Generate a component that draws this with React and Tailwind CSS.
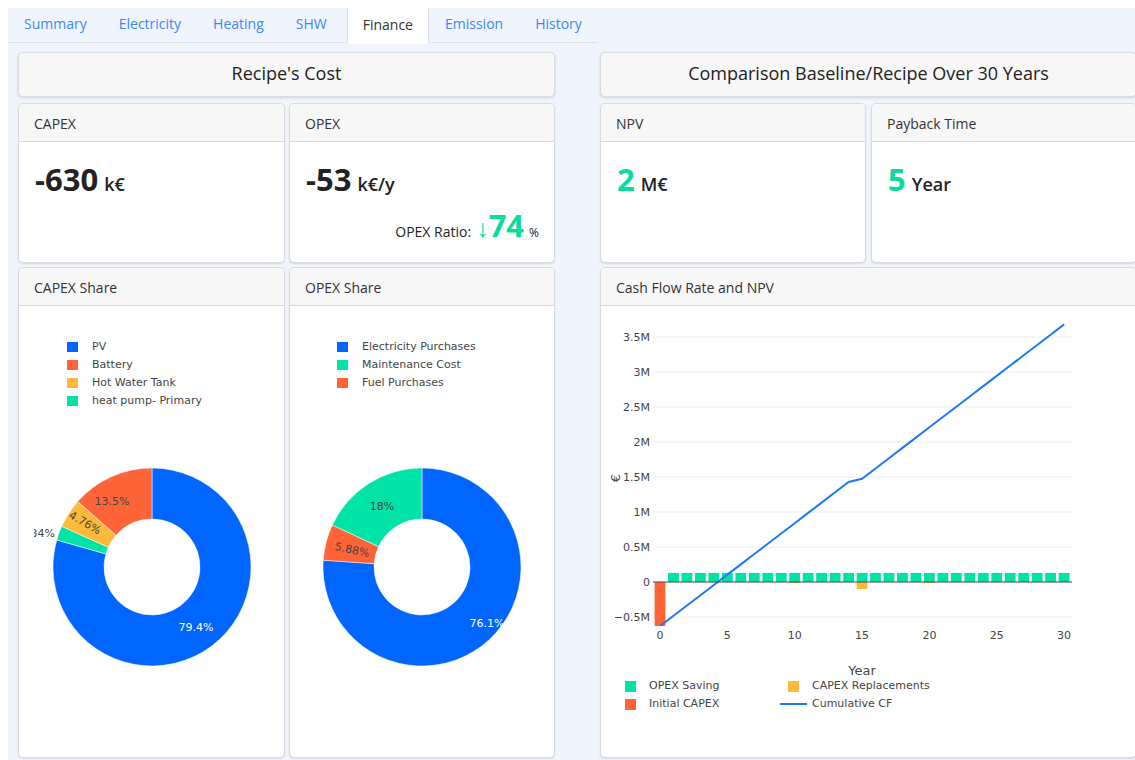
import { Fragment } from "react";

const BLUE = "#0066ff";
const RED = "#ff6338";
const YELLOW = "#ffb93a";
const TEAL = "#00e3a6";

const tabs = ["Summary", "Electricity", "Heating", "SHW", "Finance", "Emission", "History"];

// --- donut helpers ---
const pt = (cx, cy, r, f) => {
  const a = f * 2 * Math.PI;
  return [cx + r * Math.sin(a), cy - r * Math.cos(a)];
};

function arcPath(cx, cy, R, r, f0, f1) {
  const [x0, y0] = pt(cx, cy, R, f0);
  const [x1, y1] = pt(cx, cy, R, f1);
  const [x2, y2] = pt(cx, cy, r, f1);
  const [x3, y3] = pt(cx, cy, r, f0);
  const large = f1 - f0 > 0.5 ? 1 : 0;
  return `M${x0} ${y0} A${R} ${R} 0 ${large} 1 ${x1} ${y1} L${x2} ${y2} A${r} ${r} 0 ${large} 0 ${x3} ${y3}Z`;
}

function Donut({ id, cx, slices, labels }) {
  let acc = 0;
  return (
    <svg width="265" height="240" className="block">
      <defs>
        <clipPath id={id}>
          <rect x="15" y="0" width="260" height="240" />
        </clipPath>
      </defs>
      {slices.map((s, i) => {
        const d = arcPath(cx, 120, 99, 48, acc, acc + s.value);
        acc += s.value;
        return <path key={i} d={d} fill={s.color} stroke="#fff" strokeWidth="0.5" />;
      })}
      <g clipPath={`url(#${id})`} fontFamily="'DejaVu Sans', Verdana, sans-serif" fontSize="11">
        {labels.map((l, i) => (
          <text
            key={i}
            x={l.x}
            y={l.y}
            fill={l.fill || "#444"}
            textAnchor={l.anchor || "middle"}
            dominantBaseline="central"
            transform={l.rot ? `rotate(${l.rot} ${l.x} ${l.y})` : undefined}
          >
            {l.text}
          </text>
        ))}
      </g>
    </svg>
  );
}

function Legend({ items, className }) {
  return (
    <div className={`flex flex-col font-['DejaVu_Sans',Verdana,sans-serif] text-[11px] text-[#444] ${className}`}>
      {items.map((it) => (
        <div key={it.label} className="h-[18px] flex items-center">
          <span className="w-[11px] h-[10px] mr-[14px]" style={{ background: it.color }} />
          <span>{it.label}</span>
        </div>
      ))}
    </div>
  );
}

function Card({ title, className = "", children }) {
  return (
    <div className={`bg-white border border-[#d9dadc] rounded-[5px] shadow-[0_1px_2px_rgba(0,0,0,0.1)] flex flex-col overflow-hidden ${className}`}>
      <div className="h-[38px] shrink-0 bg-[#f7f7f7] border-b border-[#d9dadc] px-[15px] pt-[2px] flex items-center text-[14px] text-[#333]">
        {title}
      </div>
      <div className="flex-1 relative">{children}</div>
    </div>
  );
}

function SectionHeader({ children }) {
  return (
    <div className="h-[45px] pb-[3px] bg-[#f7f7f7] border border-[#d9dadc] rounded-[5px] shadow-[0_1px_3px_rgba(0,0,0,0.15)] flex items-center justify-center text-[18px] font-medium text-[#222]">
      {children}
    </div>
  );
}

// --- cash flow chart ---
const X = (yr) => 59 + yr * 13.47;
const Y = (v) => 276 - 70 * v;

const cumulative = Array.from({ length: 31 }, (_, n) => {
  if (n <= 14) return -0.63 + 0.147 * n;
  return 1.475 + 0.147 * (n - 15);
});

const replacements = { 10: 0.012, 15: 0.1, 20: 0.012 };

function CashFlowChart() {
  const yTicks = [3.5, 3, 2.5, 2, 1.5, 1, 0.5, 0, -0.5];
  const xTicks = [0, 5, 10, 15, 20, 25, 30];
  const line = cumulative.map((v, i) => `${X(i)},${Y(v)}`).join(" ");
  const bw = 10.8;
  return (
    <svg width="536" height="371" className="block" fontFamily="'DejaVu Sans', Verdana, sans-serif" fontSize="11">
      <defs>
        <clipPath id="plot-area">
          <rect x="52" y="15" width="420" height="305" />
        </clipPath>
      </defs>
      {yTicks.map((t) => (
        <Fragment key={t}>
          {t !== 0 && <line x1="52" x2="471" y1={Y(t)} y2={Y(t)} stroke="#eee" />}
          <text x="49" y={Y(t)} textAnchor="end" dominantBaseline="central" fill="#444">
            {t === 0 ? "0" : t < 0 ? "−0.5M" : `${t}M`}
          </text>
        </Fragment>
      ))}
      {xTicks.map((t) => (
        <text key={t} x={X(t)} y="329" textAnchor="middle" dominantBaseline="central" fill="#444">
          {t}
        </text>
      ))}
      <g clipPath="url(#plot-area)">
        {Array.from({ length: 30 }, (_, i) => i + 1).map((yr) => (
          <rect key={yr} x={X(yr) - bw / 2} y={Y(0.13)} width={bw} height={Y(0) - Y(0.13)} fill={TEAL} />
        ))}
        {Object.entries(replacements).map(([yr, v]) => (
          <rect key={yr} x={X(+yr) - bw / 2} y={Y(0)} width={bw} height={Math.max(1, Y(-v) - Y(0))} fill={YELLOW} />
        ))}
        <rect x={X(0) - bw / 2} y={Y(0)} width={bw} height={Y(-0.63) - Y(0)} fill={RED} />
        <polyline points={line} fill="none" stroke="#1f78f5" strokeWidth="2" />
      </g>
      <line x1="52" x2="471" y1={Y(0)} y2={Y(0)} stroke="#444" strokeWidth="1" />
      <text x="261" y="364" textAnchor="middle" dominantBaseline="central" fontSize="13" fill="#444">
        Year
      </text>
      <text x="14" y="172" textAnchor="middle" dominantBaseline="central" fontSize="13" fill="#444" transform="rotate(-90 14 172)">
        €
      </text>
    </svg>
  );
}

function CashLegend() {
  const Item = ({ symbol, label }) => (
    <div className="h-[18px] flex items-center">
      <div className="w-[37px] flex justify-center">{symbol}</div>
      <span>{label}</span>
    </div>
  );
  const sq = (c) => <span className="w-[11px] h-[11px] block" style={{ background: c }} />;
  return (
    <div className="grid grid-cols-[163px_auto] pl-[11px] font-['DejaVu_Sans',Verdana,sans-serif] text-[11px] text-[#444]">
      <Item symbol={sq(TEAL)} label="OPEX Saving" />
      <Item symbol={sq(YELLOW)} label="CAPEX Replacements" />
      <Item symbol={sq(RED)} label="Initial CAPEX" />
      <Item symbol={<span className="w-[27px] h-[2px] block bg-[#1f78f5]" />} label="Cumulative CF" />
    </div>
  );
}

function BigValue({ value, unit, green }) {
  return (
    <div className="flex items-baseline gap-[6px] px-[16px] pt-[22px]">
      <span className={`text-[31px] font-bold leading-none ${green ? "text-[#08dc9c]" : "text-[#222]"}`}>{value}</span>
      <span className="text-[18px] font-semibold text-[#222] leading-none">{unit}</span>
    </div>
  );
}

export default function App() {
  return (
    <div className="w-[1135px] h-[760px] overflow-hidden bg-white font-['Open_Sans',sans-serif]">
      <div className="ml-[8px] mt-[8px] h-[752px] w-[1200px] bg-[#f0f4fc]">
        {/* tab strip */}
        <div className="w-[590px] h-[35px] flex border-b border-[#dde1e8]">
          {tabs.map((t) => (
            <div
              key={t}
              className={`flex items-center pb-[3px] text-[14px] ${
                t === "Finance"
                  ? "bg-white text-[#333] border-x border-[#dde1e8] h-[36px] px-[15px] ml-[4px]"
                  : "text-[#3d86f5] px-[16px]"
              }`}
            >
              {t}
            </div>
          ))}
        </div>

        <div className="flex gap-[45px] pl-[10px] pt-[9px]">
          {/* left column */}
          <div className="w-[537px] flex flex-col gap-[5px]">
            <SectionHeader>Recipe's Cost</SectionHeader>
            <div className="flex gap-[4px] mt-[1px]">
              <Card title="CAPEX" className="w-[267px] h-[160px]">
                <BigValue value="-630" unit="k€" />
              </Card>
              <Card title="OPEX" className="w-[266px] h-[160px]">
                <BigValue value="-53" unit="k€/y" />
                <div className="absolute right-[15px] bottom-[20px] flex items-baseline text-[#222]">
                  <span className="text-[14px] mr-[5px]">OPEX Ratio:</span>
                  <span className="text-[25px] leading-none text-[#08dc9c] font-light">↓</span>
                  <span className="text-[31px] leading-none font-bold text-[#08dc9c] mr-[5px]">74</span>
                  <span className="text-[12px]">%</span>
                </div>
              </Card>
            </div>
            <div className="flex gap-[4px] -mt-px">
              <Card title="CAPEX Share" className="w-[267px] h-[491px]">
                <Legend
                  className="pl-[48px] pt-[32px]"
                  items={[
                    { label: "PV", color: BLUE },
                    { label: "Battery", color: RED },
                    { label: "Hot Water Tank", color: YELLOW },
                    { label: "heat pump- Primary", color: TEAL },
                  ]}
                />
                <div className="mt-[37px]">
                  <Donut
                    id="capex-clip"
                    cx={133}
                    slices={[
                      { value: 0.794, color: BLUE },
                      { value: 0.0234, color: TEAL },
                      { value: 0.0476, color: YELLOW },
                      { value: 0.135, color: RED },
                    ]}
                    labels={[
                      { text: "79.4%", x: 177, y: 180, fill: "#fff" },
                      { text: "13.5%", x: 93, y: 54 },
                      { text: "4.76%", x: 66, y: 76, rot: 30 },
                      { text: "2.34%", x: 36, y: 86, anchor: "end" },
                    ]}
                  />
                </div>
              </Card>
              <Card title="OPEX Share" className="w-[266px] h-[491px]">
                <Legend
                  className="pl-[47px] pt-[32px]"
                  items={[
                    { label: "Electricity Purchases", color: BLUE },
                    { label: "Maintenance Cost", color: TEAL },
                    { label: "Fuel Purchases", color: RED },
                  ]}
                />
                <div className="mt-[55px]">
                  <Donut
                    id="opex-clip"
                    cx={132}
                    slices={[
                      { value: 0.761, color: BLUE },
                      { value: 0.0588, color: RED },
                      { value: 0.1802, color: TEAL },
                    ]}
                    labels={[
                      { text: "76.1%", x: 197, y: 176, fill: "#fff" },
                      { text: "18%", x: 92, y: 59 },
                      { text: "5.88%", x: 62, y: 103, rot: 12 },
                    ]}
                  />
                </div>
              </Card>
            </div>
          </div>

          {/* right column */}
          <div className="w-[537px] flex flex-col gap-[5px]">
            <SectionHeader>Comparison Baseline/Recipe Over 30 Years</SectionHeader>
            <div className="flex gap-[5px] mt-[1px]">
              <Card title="NPV" className="w-[266px] h-[160px]">
                <BigValue value="2" unit="M€" green />
              </Card>
              <Card title="Payback Time" className="w-[266px] h-[160px]">
                <BigValue value="5" unit="Year" green />
              </Card>
            </div>
            <Card title="Cash Flow Rate and NPV" className="w-[537px] h-[491px] -mt-px">
              <CashFlowChart />
              <CashLegend />
            </Card>
          </div>
        </div>
      </div>
    </div>
  );
}
